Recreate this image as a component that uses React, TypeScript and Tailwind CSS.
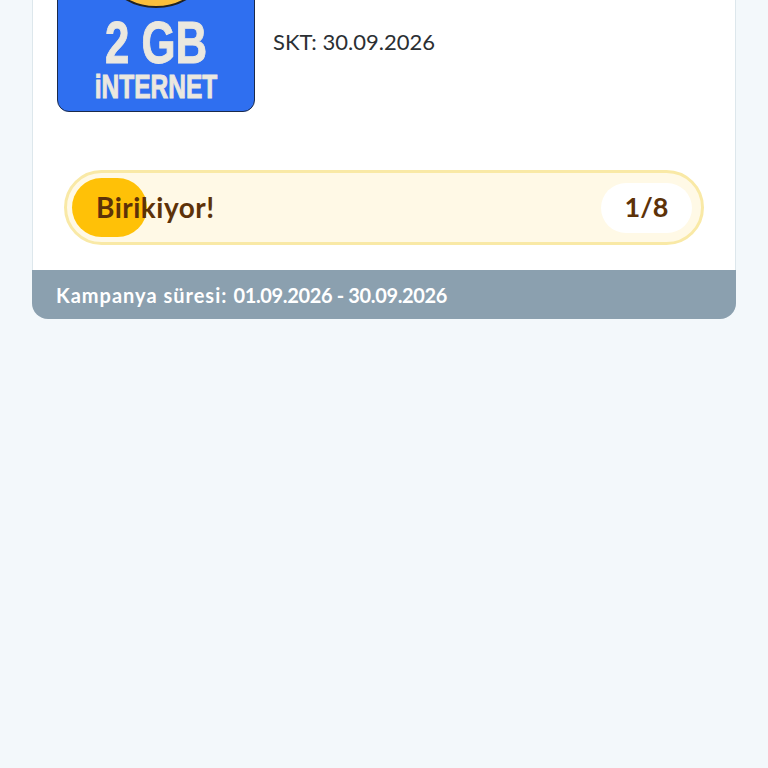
export default function App() {
  return (
    <main className="h-[768px] overflow-hidden bg-[#f3f8fb] px-8 font-['Lato',sans-serif]">
      {/* card is scrolled past the top of the window */}
      <div className="-mt-[88px] rounded-b-[16px] border-x border-[#dde7ec] bg-white">
        <div className="flex items-end pl-6 pt-[2px]">
          <div className="relative flex h-[198px] w-[198px] flex-col items-center justify-end overflow-hidden rounded-[12px] border-[1.5px] border-[#1b2a4a] bg-[#2f6ff0] pb-[10px]">
            <div className="absolute left-[37px] -top-[29px] h-[122px] w-[122px] rounded-full border-2 border-[#222] bg-[#fbbf3c]" />
            <div className="scale-x-[0.73] font-['Liberation_Sans',sans-serif] text-[60px] font-bold leading-[50px] text-[#ebe8df] [-webkit-text-stroke:1px_#ebe8df]">
              2 GB
            </div>
            <div className="mt-[3px] scale-x-[0.72] whitespace-nowrap font-['Liberation_Sans',sans-serif] text-[34px] font-bold leading-[30px] text-[#ebe8df] [-webkit-text-stroke:1px_#ebe8df]">
              iNTERNET
            </div>
          </div>
          <p className="mb-[56px] ml-[18px] text-[22px] leading-7 text-[#2b2f33]">SKT: 30.09.2026</p>
        </div>

        <div className="mx-[31px] mt-[58px] flex h-[75px] items-center justify-between overflow-hidden rounded-full border-[3px] border-[#f9e9a6] bg-[#fff9e6] pl-[5px] pr-[9px]">
          <div className="relative flex h-[59px] items-center">
            <div className="h-[59px] w-[75px] rounded-full bg-[#ffc107]" />
            <span className="absolute left-[24px] top-0 whitespace-nowrap text-[28px] leading-[59px] font-bold tracking-[0.5px] text-[#5d3208]">Birikiyor!</span>
          </div>
          <div className="flex h-[50px] w-[91px] items-center justify-center rounded-full bg-white text-[27px] font-bold text-[#5d3208]">
            1/8
          </div>
        </div>

        <div className="-mx-px mt-[25px] flex h-[49px] items-center gap-[6px] rounded-b-[16px] bg-[#8ba0af] px-6 text-[20px] font-bold text-white">
          <span className="tracking-[1px]">Kampanya süresi:</span>
          <span className="-tracking-[0.35px]">01.09.2026 - 30.09.2026</span>
        </div>
      </div>
    </main>
  );
}
